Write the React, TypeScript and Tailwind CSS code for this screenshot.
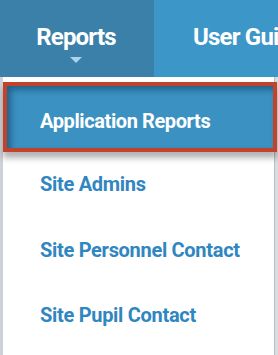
import React from "react";

const items = ["Site Admins", "Site Personnel Contact", "Site Pupil Contact"];

function App() {
  return (
    <div className="w-[278px] h-[355px] overflow-hidden bg-[#d9dde1] font-['Roboto',sans-serif]">
      {/* top nav */}
      <div className="flex h-[77px]">
        <div className="w-[154px] shrink-0 bg-[#3a80a8] flex flex-col items-center pt-[21px] pr-[2px]">
          <span className="text-white font-bold text-[24px] leading-[32px] tracking-[-0.8px]">
            Reports
          </span>
          <span className="mt-[4px] w-0 h-0 border-x-[6px] border-x-transparent border-t-[6px] border-t-[#a9d3ee]" />
        </div>
        <div className="flex-1 min-w-0 overflow-hidden bg-[#3c96c7] pl-[39px] pt-[21px] whitespace-nowrap">
          <span className="text-white font-bold text-[24px] leading-[32px] tracking-[-0.8px]">
            User Guide
          </span>
        </div>
      </div>

      {/* dropdown */}
      <div className="flex h-[278px]">
        <div className="w-[3px] bg-[#cdd2d7]" />
        <div className="w-[272px] bg-white border-r border-[#b9bec3] pt-[5px]">
          <div className="relative -mr-[3px] h-[70px] border-[4px] border-[#c1432b] bg-[#3b92c2] shadow-[inset_4px_4px_6px_rgba(0,40,70,0.45),0_6px_6px_rgba(0,0,0,0.3)] pl-[33px] pt-[23px]">
            <span className="text-white font-bold text-[20px] leading-[24px] tracking-[-0.4px]">
              Application Reports
            </span>
          </div>
          <div className="flex flex-col">
            {items.map((t) => (
              <div key={t} className="h-[65px] pl-[37px] pt-[21px] first:pt-[20px]">
                <span className="text-[#2f86c0] font-bold text-[20px] leading-[24px] tracking-[-0.3px]">
                  {t}
                </span>
              </div>
            ))}
          </div>
        </div>
      </div>
    </div>
  );
}

export default App;
